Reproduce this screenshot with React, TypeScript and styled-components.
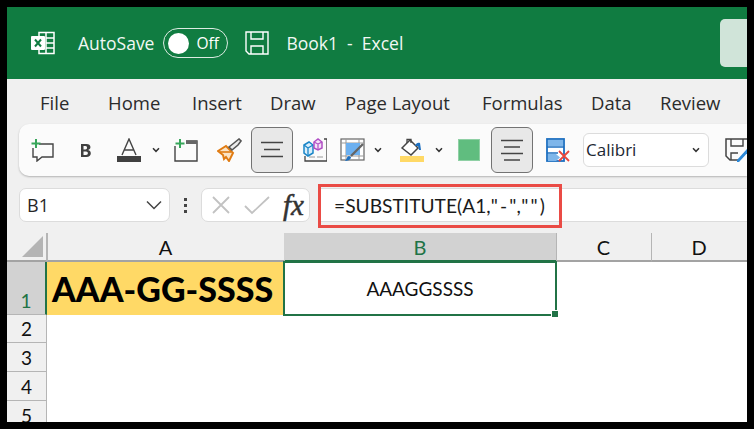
import { FC, ReactNode } from 'react'
import styled, { createGlobalStyle } from 'styled-components'

const Global = createGlobalStyle`
  html, body { margin: 0; padding: 0; background: #000; }
  body { width: 754px; height: 429px; overflow: hidden; }
`

const Frame = styled.div`
  width: 740px;
  height: 415px;
  margin: 7px;
  overflow: hidden;
  background: #f0f0f0;
  font-family: 'Open Sans', 'Noto Sans', sans-serif;
  color: #262626;
`

/* title bar */
const TitleBar = styled.div`
  height: 72px;
  background: #107c41;
  color: #fff;
  display: flex;
  align-items: center;
  padding-left: 24px;
  font-size: 17.5px;
`
const TitleText = styled.span<{ $ml?: number }>`
  margin-left: ${(p) => p.$ml ?? 0}px;
  white-space: pre;
  color: #f2f8f4;
`
const Toggle = styled.div`
  width: 65px;
  height: 30px;
  margin-left: 9px;
  box-sizing: border-box;
  border: 1px solid #dcebe2;
  border-radius: 15px;
  display: flex;
  align-items: center;
  padding-left: 4px;
  gap: 7px;
  font-size: 15.5px;
`
const Knob = styled.div`
  width: 21px;
  height: 21px;
  border-radius: 50%;
  background: #fff;
`
const ShareButton = styled.div`
  width: 27px;
  height: 48px;
  margin-left: auto;
  background: #d0e4d9;
  border-radius: 5px 0 0 5px;
`

/* tabs */
const Tabs = styled.div`
  height: 45px;
  display: flex;
  align-items: center;
  padding: 2px 0 0 33px;
  box-sizing: border-box;
  font-size: 18.5px;
  color: #2b2b2b;
`
const Tab = styled.span<{ $w: number }>`
  flex: none;
  width: ${(p) => p.$w}px;
  white-space: nowrap;
`

/* ribbon */
const Ribbon = styled.div`
  height: 52px;
  margin-left: 12px;
  background: #fbfbfb;
  border-radius: 10px 0 0 10px;
  box-shadow: 0 1px 2px rgba(0, 0, 0, 0.25);
  display: flex;
  align-items: center;
  padding-left: 12px;
`
const Slot = styled.div<{ $ml?: number }>`
  margin-left: ${(p) => p.$ml ?? 0}px;
  display: flex;
  flex: none;
`
const Toggled = styled.div<{ $ml: number }>`
  width: 42px;
  height: 46px;
  margin-left: ${(p) => p.$ml}px;
  flex: none;
  box-sizing: border-box;
  background: #e8e8e8;
  border: 1px solid #737373;
  border-radius: 6px;
  display: flex;
  align-items: center;
  justify-content: center;
`
const Swatch = styled.div`
  width: 22px;
  height: 22px;
  margin-left: 15px;
  flex: none;
  background: #60bd7f;
  border: 1px solid #8fd0a5;
  box-sizing: border-box;
`
const FontSelect = styled.div`
  width: 126px;
  height: 34px;
  margin-left: 13px;
  flex: none;
  box-sizing: border-box;
  background: #fff;
  border: 1px solid #dcdcdc;
  border-radius: 6px;
  display: flex;
  align-items: center;
  justify-content: space-between;
  padding: 0 8px 1px 2px;
  font-size: 17px;
  color: #1c2733;
`

/* formula bar */
const FormulaRow = styled.div`
  height: 57px;
  box-sizing: border-box;
  padding: 12px 0 11px 12px;
  display: flex;
  align-items: stretch;
`
const Box = styled.div`
  box-sizing: border-box;
  background: #fff;
  border: 1px solid #dcdcdc;
  display: flex;
  align-items: center;
`
const NameBox = styled(Box)`
  width: 151px;
  border-radius: 7px;
  padding: 0 7px;
  justify-content: space-between;
  font-size: 18px;
`
const Dots = styled.div`
  width: 31px;
  display: flex;
  flex-direction: column;
  align-items: center;
  justify-content: center;
  gap: 3px;
  span {
    width: 3px;
    height: 3px;
    background: #444;
  }
`
const ActionBox = styled(Box)`
  width: 109px;
  border-radius: 7px;
  padding-left: 9px;
`
const FxMark = styled.span`
  margin-left: 13px;
  font-family: 'Liberation Serif', serif;
  font-style: italic;
  font-size: 29px;
  line-height: 30px;
  color: #333;
  -webkit-text-stroke: 0.5px #333;
`
const FormulaInput = styled(Box)`
  flex: 1;
  margin-left: 8px;
  border-right: none;
  position: relative;
  padding-left: 15px;
  font-family: Lato, sans-serif;
  font-size: 19.2px;
  color: #1a1a1a;
  white-space: pre;
`
const QuotedArgs = styled.span`
  letter-spacing: 2.2px;
`
const RedOutline = styled.div`
  position: absolute;
  left: -1px;
  top: -5px;
  width: 244px;
  height: 44px;
  box-sizing: border-box;
  border: 3px solid #ea4b45;
`

/* sheet */
const Sheet = styled.div`
  display: grid;
  grid-template-columns: 40px 237px 272px 95px 96px;
  grid-template-rows: 29px 53px 28px 29px 29px 29px;
  font-family: Lato, sans-serif;
  background: #fff;
`
const Corner = styled.div`
  background: #f0f0f0;
  border-right: 1px solid #b5b5b5;
  border-bottom: 2px solid #a3a3a3;
  box-sizing: border-box;
  display: flex;
  align-items: flex-end;
  justify-content: flex-end;
  padding: 0 3px 3px 0;
`
const ColHead = styled.div<{ $on?: boolean }>`
  box-sizing: border-box;
  background: ${(p) => (p.$on ? '#d2d2d2' : '#f0f0f0')};
  color: ${(p) => (p.$on ? '#217346' : '#111')};
  border-left: 1px solid ${(p) => (p.$on ? '#d2d2d2' : '#b5b5b5')};
  border-bottom: 2px solid ${(p) => (p.$on ? '#217346' : '#a3a3a3')};
  padding: 1px 1px 0 0;
  display: flex;
  align-items: center;
  justify-content: center;
  font-size: 20px;
`
const RowHead = styled.div<{ $on?: boolean }>`
  box-sizing: border-box;
  background: ${(p) => (p.$on ? '#d2d2d2' : '#f0f0f0')};
  color: ${(p) => (p.$on ? '#217346' : '#111')};
  border-right: ${(p) => (p.$on ? '2px solid #217346' : '1px solid #b5b5b5')};
  border-bottom: 1px solid #b5b5b5;
  padding-bottom: 1px;
  display: flex;
  align-items: flex-end;
  justify-content: center;
  font-size: 19px;
  line-height: 24px;
`
const TitleCell = styled.div`
  background: #ffd966;
  color: #000;
  font-weight: 900;
  font-size: 34px;
  display: flex;
  align-items: center;
  padding-left: 5px;
  white-space: nowrap;
`
const ActiveCell = styled.div`
  position: relative;
  box-sizing: border-box;
  margin: -1px;
  border: 2px solid #217346;
  display: flex;
  align-items: center;
  justify-content: center;
  font-size: 19px;
  color: #111;
`
const FillHandle = styled.span`
  position: absolute;
  right: -4px;
  bottom: -4px;
  width: 6px;
  height: 6px;
  background: #217346;
  border: 1px solid #fff;
`
const Blank = styled.div<{ $span?: number }>`
  grid-column: span ${(p) => p.$span ?? 1};
`

const Chevron: FC<{ ml?: number }> = ({ ml }) => (
  <Slot $ml={ml}>
    <svg width="8" height="6" viewBox="0 0 8 6">
      <path d="M1 1.2 4 4.3 7 1.2" fill="none" stroke="#333" strokeWidth="1.5" />
    </svg>
  </Slot>
)

const Icon: FC<{ ml?: number; w?: number; h?: number; children: ReactNode }> = ({ ml, w = 24, h = 24, children }) => (
  <Slot $ml={ml}>
    <svg width={w} height={h} viewBox={`0 0 ${w} ${h}`}>
      {children}
    </svg>
  </Slot>
)

const CenterLines = () => (
  <svg width="24" height="20" viewBox="0 0 24 20">
    <path d="M1 2.5H23M4 9.5H20M1 16.5H23" stroke="#444" strokeWidth="1.6" />
  </svg>
)

const App: FC = () => (
  <>
    <Global />
    <Frame>
      <TitleBar>
        <Icon w={24} h={24}>
          <path d="M8 1.5h15v21H8z" fill="none" stroke="#fff" strokeWidth="1.5" />
          <path d="M15 2v20M15 7h8M15 12h8M15 17h8" stroke="#fff" strokeWidth="1.5" />
          <rect x="0" y="5" width="14" height="14" rx="1" fill="#fff" />
          <path d="M4 8.5 10 15.5M10 8.5 4 15.5" stroke="#107c41" strokeWidth="2" />
        </Icon>
        <TitleText $ml={23}>AutoSave</TitleText>
        <Toggle>
          <Knob />
          <span>Off</span>
        </Toggle>
        <Slot $ml={17}>
          <svg width="24" height="24" viewBox="0 0 24 24" fill="none" stroke="#fff" strokeWidth="1.4">
            <path d="M1 1h22v22H4l-3-3z" />
            <path d="M6 1v7h12V1M6 23v-8h12v8" />
          </svg>
        </Slot>
        <TitleText $ml={17}>{'Book1  -  Excel'}</TitleText>
        <ShareButton />
      </TitleBar>

      <Tabs>
        <Tab $w={68}>File</Tab>
        <Tab $w={84}>Home</Tab>
        <Tab $w={78}>Insert</Tab>
        <Tab $w={75}>Draw</Tab>
        <Tab $w={137}>Page Layout</Tab>
        <Tab $w={109}>Formulas</Tab>
        <Tab $w={69}>Data</Tab>
        <Tab $w={60}>Review</Tab>
      </Tabs>

      <Ribbon>
        <Icon w={23} h={23}>
          <path d="M8 5H22V18H11L6 22V18H2V9" fill="none" stroke="#444" strokeWidth="1.4" />
          <path d="M5 0V9M0.5 4.500H9.500" stroke="#37a65a" strokeWidth="2" />
        </Icon>
        <Slot $ml={26}>
          <svg width="12" height="15" viewBox="0 0 12 15">
            <path d="M1 1h5.500c5 0 5 5.500 1.500 6 4 .5 4 7-1.500 7H1zM3.500 3v3.500h2c2 0 2-3.500 0-3.500zM3.500 8.500V12h2.500c2.500 0 2.500-3.500 0-3.500z" fill="#404040" fillRule="evenodd" />
          </svg>
        </Slot>
        <Icon ml={25} w={24} h={24}>
          <path d="M5 17 12 1 19 17M7.500 12H16.500" fill="none" stroke="#444" strokeWidth="1.4" />
          <rect x="0" y="18" width="24" height="6" fill="#404040" />
        </Icon>
        <Chevron ml={11} />
        <Icon ml={14} w={24} h={23}>
          <path d="M1 7V22H23V2H12" fill="none" stroke="#444" strokeWidth="1.4" />
          <path d="M12 2H23V5H12z" fill="#666" />
          <path d="M6 0V9M1.500 4.500H10.500" stroke="#37a65a" strokeWidth="2" />
        </Icon>
        <Icon ml={19} w={25} h={24}>
          <path d="M1 13 9 8 16 15 12 23 9 19 7 21 6 17z" fill="#fbe3c4" stroke="#e07b12" strokeWidth="2" />
          <path d="M3 14 14 14" stroke="#e07b12" strokeWidth="1.600" />
          <path d="M12 9 17 5 22 1 24 3 21 7 15 12z" fill="#ececec" stroke="#555" strokeWidth="1.600" />
        </Icon>
        <Toggled $ml={9}>
          <CenterLines />
        </Toggled>
        <Icon ml={10} w={24} h={24}>
          <path d="M2 18V23H24V1H21" fill="none" stroke="#444" strokeWidth="1.300" />
          <path d="M6 19H12M14 19H20" stroke="#999" strokeWidth="1.200" />
          <path d="M1 7 6 4 10 7V15L5 18 1 15z" fill="#d9eefb" stroke="#1b86c8" strokeWidth="1.500" />
          <path d="M1 7 5 10V18M5 10 10 7" fill="none" stroke="#1b86c8" strokeWidth="1.300" />
          <path d="M11 4 15 1 19 4V10L15 12 11 10z" fill="#f4e2f7" stroke="#b14fc5" strokeWidth="1.500" />
          <path d="M11 4 15 6V12M15 6 19 4" fill="none" stroke="#b14fc5" strokeWidth="1.200" />
        </Icon>
        <Icon ml={13} w={25} h={24}>
          <rect x="1" y="1" width="23" height="21" fill="#fff" stroke="#666" strokeWidth="1.200" />
          <path d="M1 5H24M6 1V22M19 1V22M1 18H24" stroke="#999" strokeWidth="1" />
          <rect x="6" y="5" width="14" height="12" fill="#6cb0f0" />
          <path d="M11 18 23 6" stroke="#666" strokeWidth="2.400" />
          <path d="M5 23c2 0 6-1 6-4l-2-1c-2 0-2 3-4 5z" fill="#1c6fc0" />
        </Icon>
        <Chevron ml={9} />
        <Icon ml={18} w={24} h={24}>
          <path d="M2 10 10 2 18 10 11 17z" fill="#fff" stroke="#444" strokeWidth="1.500" />
          <path d="M7 5V1.500h4V5" fill="none" stroke="#444" strokeWidth="1.300" />
          <path d="M15 8c1-3 3-4 5-3l1 7h-2l-1-4z" fill="#1c6fc0" />
          <rect x="0" y="18" width="24" height="6" fill="#ffd966" />
        </Icon>
        <Chevron ml={11} />
        <Swatch />
        <Toggled $ml={11}>
          <svg width="24" height="24" viewBox="0 0 24 24">
            <path d="M1 2.500H23M4 9H20M1 15.500H23M4 22H20" stroke="#444" strokeWidth="1.600" />
          </svg>
        </Toggled>
        <Icon ml={13} w={24} h={24}>
          <rect x="1" y="1" width="17" height="22" fill="#fff" stroke="#1c6fc0" strokeWidth="1.800" />
          <rect x="2" y="2" width="15" height="6" fill="#7eb6ea" />
          <path d="M1 9H18M1 15H12" stroke="#1c6fc0" strokeWidth="1.500" />
          <path d="M2 16H10L14 19.500 10 23H2z" fill="#7eb6ea" />
          <path d="M13 13 23 23M23 13 13 23" stroke="#e8453c" strokeWidth="1.800" />
        </Icon>
        <FontSelect>
          <span>Calibri</span>
          <Chevron />
        </FontSelect>
        <Icon ml={16} w={24} h={24}>
          <path d="M1 1H23V12L14 22H5L1 18z" fill="none" stroke="#444" strokeWidth="1.500" />
          <path d="M6 1V8H18V1M6 22V15H13" fill="none" stroke="#444" strokeWidth="1.400" />
          <path d="M12 22 22 11 24 13 14 24H12z" fill="#2b88d8" />
        </Icon>
      </Ribbon>

      <FormulaRow>
        <NameBox>
          B1
          <svg width="16" height="10" viewBox="0 0 16 10">
            <path d="M1 1.500 8 8.500 15 1.500" fill="none" stroke="#444" strokeWidth="1.500" />
          </svg>
        </NameBox>
        <Dots>
          <span />
          <span />
          <span />
        </Dots>
        <ActionBox>
          <svg width="20" height="20" viewBox="0 0 20 20">
            <path d="M2 2 18 18M18 2 2 18" stroke="#c2c2c2" strokeWidth="1.800" />
          </svg>
          <Slot $ml={13}>
            <svg width="26" height="20" viewBox="0 0 26 20">
              <path d="M1 11 8 18 25 2" fill="none" stroke="#c2c2c2" strokeWidth="1.800" />
            </svg>
          </Slot>
          <FxMark>fx</FxMark>
        </ActionBox>
        <FormulaInput>
          =SUBSTITUTE(A1,<QuotedArgs>"-","")</QuotedArgs>
          <RedOutline />
        </FormulaInput>
      </FormulaRow>

      <Sheet>
        <Corner>
          <svg width="21" height="21" viewBox="0 0 21 21">
            <path d="M21 0V21H0z" fill="#b4b4b4" />
          </svg>
        </Corner>
        <ColHead>A</ColHead>
        <ColHead $on>B</ColHead>
        <ColHead>C</ColHead>
        <ColHead>D</ColHead>

        <RowHead $on>1</RowHead>
        <TitleCell>AAA-GG-SSSS</TitleCell>
        <ActiveCell>
          AAAGGSSSS
          <FillHandle />
        </ActiveCell>
        <Blank $span={2} />

        <RowHead>2</RowHead>
        <Blank $span={4} />
        <RowHead>3</RowHead>
        <Blank $span={4} />
        <RowHead>4</RowHead>
        <Blank $span={4} />
        <RowHead>5</RowHead>
        <Blank $span={4} />
      </Sheet>
    </Frame>
  </>
)

export default App
